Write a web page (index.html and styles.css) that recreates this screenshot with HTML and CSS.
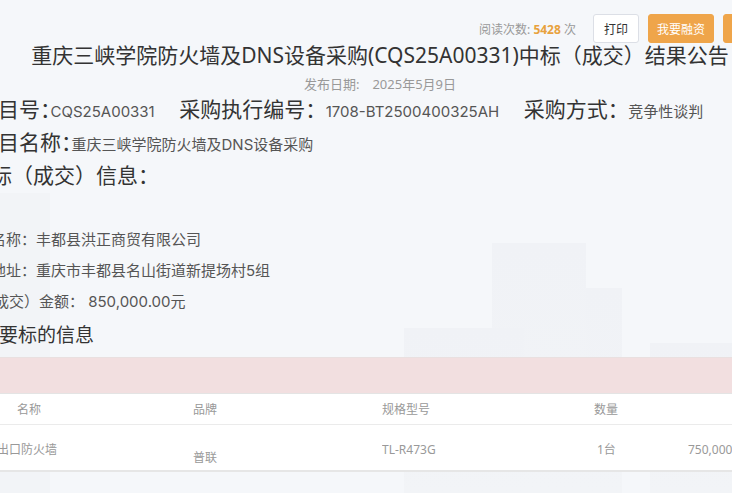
FILE: index.html
```html
<!DOCTYPE html>
<html lang="zh-CN">
  <head>
    <meta charset="UTF-8" />
    <meta name="viewport" content="width=device-width, initial-scale=1.0" />
    <title>重庆三峡学院防火墙及DNS设备采购中标（成交）结果公告</title>
    <link rel="stylesheet" href="styles.css">
  </head>
  <body>
    <div class="skyline">
      <span class="tower t1"></span>
      <span class="tower t2"></span>
      <span class="tower t3"></span>
      <span class="tower t4"></span>
      <span class="tower t5"></span>
    </div>

    <div class="page">
      <div class="toolbar">
        <span class="views">阅读次数: <b>5428</b> 次</span>
        <button class="btn">打印</button>
        <button class="btn btn-orange">我要融资</button>
        <button class="btn btn-orange">在线咨询</button>
      </div>

      <h1 class="title">重庆三峡学院防火墙及DNS设备采购(CQS25A00331)中标（成交）结果公告</h1>
      <p class="date">发布日期:　2025年5月9日</p>

      <div class="detail">
        <div class="line">
          <span class="field">
            <span class="label">项目号：</span><span class="value">CQS25A00331</span>
          </span>
          <span class="field">
            <span class="label">采购执行编号：</span><span class="value">1708-BT2500400325AH</span>
          </span>
          <span class="field">
            <span class="label">采购方式：</span><span class="value">竞争性谈判</span>
          </span>
        </div>
        <div class="line">
          <span class="label">项目名称：</span><span class="value">重庆三峡学院防火墙及DNS设备采购</span>
        </div>

        <h2 class="heading heading-win">中标（成交）信息：</h2>

        <div class="supplier">
          <p class="row">供应商名称：丰都县洪正商贸有限公司</p>
          <p class="row">供应商地址：重庆市丰都县名山街道新提场村5组</p>
          <p class="row row-amount">中标（成交）金额：&nbsp;850,000.00元</p>
        </div>

        <h2 class="heading heading-items">主要标的信息</h2>
      </div>

      <table class="goods">
        <colgroup>
          <col class="c-name" />
          <col class="c-brand" />
          <col class="c-model" />
          <col class="c-qty" />
          <col />
        </colgroup>
        <thead>
          <tr class="band"><th colspan="5"></th></tr>
          <tr class="head">
            <th class="first">名称</th>
            <th>品牌</th>
            <th>规格型号</th>
            <th>数量</th>
            <th></th>
          </tr>
        </thead>
        <tbody>
          <tr>
            <td class="first">出口防火墙</td>
            <td class="low">普联</td>
            <td>TL-R473G</td>
            <td class="qty">1台</td>
            <td>750,000.00元</td>
          </tr>
        </tbody>
      </table>
    </div>
  </body>
</html>
```

FILE: styles.css
```css
* {
  margin: 0;
  padding: 0;
  box-sizing: border-box;
}

body {
  font-family: "Noto Sans", "Noto Sans CJK SC", sans-serif;
  background: #f5f7fa;
  color: #333;
  height: 100vh;
  overflow: hidden;
  position: relative;
}

/* faint city picture behind the content */
.skyline {
  position: absolute;
  left: 0;
  right: 0;
  bottom: 0;
  height: 300px;
  pointer-events: none;
}

.tower {
  position: absolute;
  bottom: 0;
  background: linear-gradient(180deg, #f0f2f6, #f2f4f7);
}

.t1 { left: 492px; width: 94px; height: 250px; }
.t2 { left: 586px; width: 36px; height: 205px; }
.t3 { left: 404px; width: 120px; height: 165px; }
.t4 { left: 650px; width: 100px; height: 150px; }
.t5 { left: 0; width: 50px; height: 300px; background: #f2f4f7; }

.page {
  position: relative;
  width: 800px;
  margin-left: -20px;
}

.toolbar {
  display: flex;
  justify-content: flex-end;
  align-items: center;
  gap: 9px;
  margin-top: 14px;
  margin-right: -9px;
}

.views {
  font-size: 12px;
  color: #999;
  margin-right: 8px;
}

.views b {
  color: #e8a23e;
}

.btn {
  height: 29px;
  padding: 0 10px;
  font-family: inherit;
  font-size: 12px;
  color: #333;
  white-space: nowrap;
  background: #fff;
  border: 1px solid #dcdfe6;
  border-radius: 3px;
}

.btn-orange {
  width: 66px;
  padding: 0;
  color: #fff;
  background: #efa54a;
  border-color: #efa54a;
}

.title {
  margin-top: -1px;
  font-size: 21px;
  font-weight: 400;
  line-height: 26px;
  text-align: center;
  color: #333;
}

.date {
  margin-top: 7px;
  font-size: 13px;
  line-height: 18px;
  text-align: center;
  color: #999;
}

.detail {
  margin-left: -3px;
}

.line {
  font-size: 21px;
  line-height: 33px;
  white-space: nowrap;
}

.field + .field {
  margin-left: 19px;
}

.field + .field .value {
  margin-left: 10px;
}

.label {
  color: #333;
  font-feature-settings: "halt";
}

.value {
  font-family: "Inter", "Noto Sans CJK SC", sans-serif;
  font-size: 15px;
  line-height: 20px;
  color: #555;
}

.heading {
  font-weight: 400;
  color: #333;
}

.heading-win {
  font-size: 21px;
  line-height: 33px;
  margin-left: -7px;
}

.supplier {
  margin-top: 32px;
  margin-left: -31px;
  font-family: "Inter", "Noto Sans CJK SC", sans-serif;
  font-size: 15px;
  color: #555;
}

.row {
  line-height: 31px;
}

.row-amount {
  margin-left: 3px;
}

.heading-items {
  font-size: 19px;
  line-height: 30px;
  margin-top: 3px;
  margin-left: 3px;
}

.goods {
  width: 100%;
  margin-top: 7px;
  border-collapse: collapse;
  table-layout: fixed;
  font-size: 12px;
  color: #999;
}

.c-name { width: 213px; }
.c-brand { width: 189px; }
.c-model { width: 212px; }
.c-qty { width: 94px; }

.goods th,
.goods td {
  text-align: left;
  font-weight: 400;
  white-space: nowrap;
  overflow: hidden;
}

.band th {
  height: 36px;
  background: #f2dfe0;
  border-top: 1px solid #e9e0e0;
  border-bottom: 1px solid #e4e4e4;
}

.head th {
  height: 31px;
  background: #fff;
  border-bottom: 1px solid #ebebeb;
}

.head th.first {
  padding-left: 37px;
}

.goods td {
  height: 46px;
  padding-top: 4px;
  background: #fff;
  border-bottom: 2px solid #e6e6e6;
}

.goods td.first {
  padding-left: 17px;
}

.goods td.low {
  padding-top: 20px;
}

.goods td.qty {
  padding-left: 3px;
}
```
